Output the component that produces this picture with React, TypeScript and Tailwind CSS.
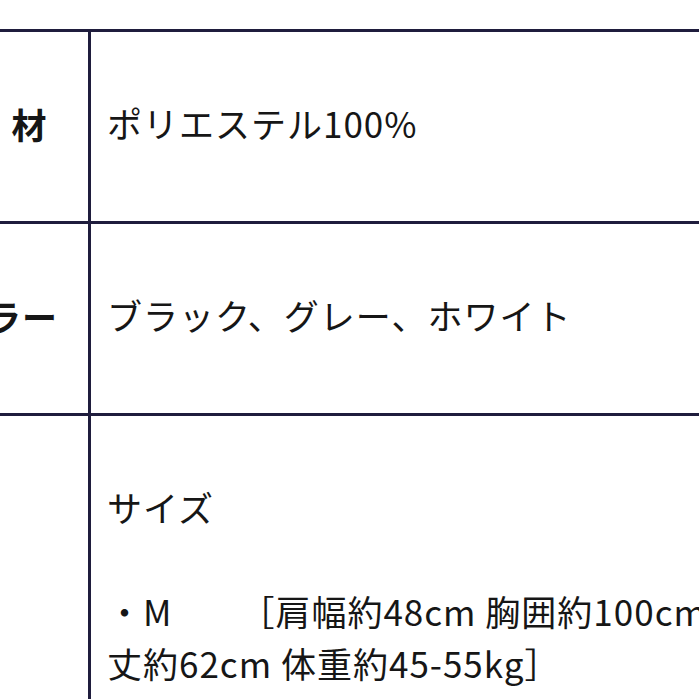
import React from "react";

export default function App() {
  const font = "font-['Noto_Sans_CJK_JP','Noto_Sans',sans-serif]";
  return (
    <div className={`w-[699px] h-[699px] overflow-hidden bg-white text-[#161616] ${font}`}>
      <div className="mt-[29px] ml-[-86px] w-[1000px] border-t-[3px] border-[#1f1d3d]">
        <div className="flex h-[192px] border-b-[3px] border-[#1f1d3d]">
          <div className="w-[177px] shrink-0 border-r-[3px] border-[#1f1d3d] flex items-center justify-center gap-[13px] pl-[8px] pb-[6px] font-bold text-[35px] leading-none">
            <span>素</span>
            <span>材</span>
          </div>
          <div className="flex-1 flex items-center pl-[16px] pb-[8px] text-[35px] leading-none tracking-[1px]">
            ポリエステル100%
          </div>
        </div>
        <div className="flex h-[192px] border-b-[3px] border-[#1f1d3d]">
          <div className="w-[177px] shrink-0 border-r-[3px] border-[#1f1d3d] flex items-center justify-center pl-[6px] pb-[6px] font-bold text-[35px] leading-none tracking-[1px]">
            カラー
          </div>
          <div className="flex-1 flex items-center pl-[16px] pb-[8px] text-[35px] leading-none tracking-[1px]">
            ブラック、グレー、ホワイト
          </div>
        </div>
        <div className="flex h-[400px]">
          <div className="w-[177px] shrink-0 border-r-[3px] border-[#1f1d3d]" />
          <div className="flex-1 pl-[16px] pt-[65px] text-[35px] leading-[52px] whitespace-nowrap tracking-[1px]">
            <div>サイズ</div>
            <div>&nbsp;</div>
            <div>
              ・M<span className="inline-block w-[67px]" />［肩幅約48cm 胸囲約100cm 着
            </div>
            <div>丈約62cm 体重約45-55kg］</div>
          </div>
        </div>
      </div>
    </div>
  );
}
